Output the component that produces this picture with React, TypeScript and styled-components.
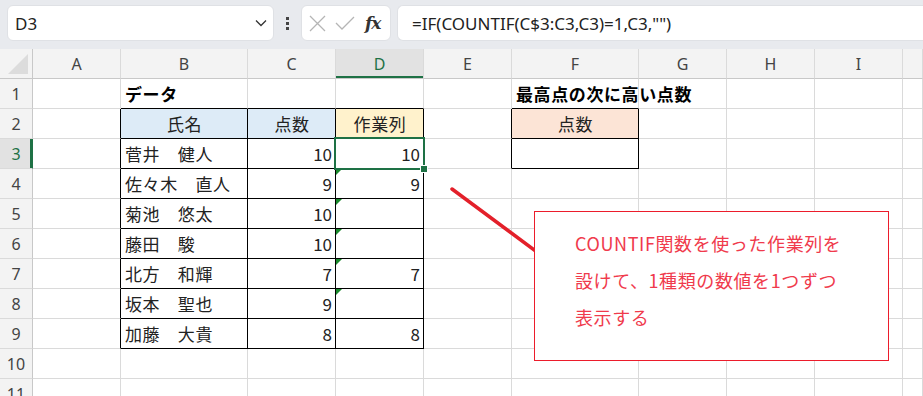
import styled, { createGlobalStyle, css } from 'styled-components';

const GlobalStyle = createGlobalStyle`
  html, body {
    margin: 0;
    padding: 0;
    background: #ffffff;
    overflow: hidden;
  }
  * {
    box-sizing: border-box;
  }
`;

const GRID_LINE = '#dadada';
const HEADER_BG = '#f3f3f3';
const SELECT_GREEN = '#1e7145';
const CJK = `"Noto Sans CJK JP", "Noto Sans", sans-serif`;

const COLUMNS = ['A', 'B', 'C', 'D', 'E', 'F', 'G', 'H', 'I', 'J'];
const ROWS = [1, 2, 3, 4, 5, 6, 7, 8, 9, 10, 11];

type Align = 'left' | 'center' | 'right';

interface CellData {
  text: string;
  align?: Align;
  bold?: boolean;
  fill?: string;
}

const names = ['菅井　健人', '佐々木　直人', '菊池　悠太', '藤田　駿', '北方　和輝', '坂本　聖也', '加藤　大貴'];
const scores = [10, 9, 10, 10, 7, 9, 8];
const helper = ['10', '9', '', '', '7', '', '8'];

const cells: Record<string, CellData> = {
  B1: { text: 'データ', bold: true },
  B2: { text: '氏名', align: 'center', fill: '#ddebf7' },
  C2: { text: '点数', align: 'center', fill: '#ddebf7' },
  D2: { text: '作業列', align: 'center', fill: '#fff2cc' },
  F1: { text: '最高点の次に高い点数', bold: true },
  F2: { text: '点数', align: 'center', fill: '#fce4d6' },
};
names.forEach((n, i) => {
  const r = i + 3;
  cells[`B${r}`] = { text: n };
  cells[`C${r}`] = { text: String(scores[i]), align: 'right' };
  cells[`D${r}`] = { text: helper[i], align: 'right' };
});

// cells with a green error flag in the corner
const flagged = new Set(['D4', 'D5', 'D6', 'D7', 'D8']);

// ranges drawn with black borders (column index: A = 0)
const boxes = [
  { c0: 1, c1: 3, r0: 2, r1: 9 },
  { c0: 5, c1: 5, r0: 2, r1: 3 },
];

const inBox = (c: number, r: number) =>
  boxes.some((b) => c >= b.c0 && c <= b.c1 && r >= b.r0 && r <= b.r1);

const Window = styled.div`
  width: 923px;
  height: 396px;
  overflow: hidden;
  font-family: ${CJK};
  color: #222;
`;

const FormulaBar = styled.div`
  height: 49px;
  background: #e8eaee;
  display: flex;
  align-items: flex-start;
  padding: 5px 0 0 7px;
`;

const Box = styled.div`
  height: 36px;
  background: #ffffff;
  border: 1px solid #dfe1e5;
  border-radius: 6px;
  display: flex;
  align-items: center;
`;

const NameBox = styled(Box)`
  width: 267px;
  padding: 0 6px 0 7px;
  justify-content: space-between;
  font-family: "Noto Sans", sans-serif;
  font-size: 17px;
  color: #222;
`;

const Kebab = styled.div`
  width: 27px;
  height: 36px;
  display: flex;
  flex-direction: column;
  align-items: center;
  justify-content: center;
  gap: 2px;
`;

const Dot = styled.span`
  width: 3px;
  height: 3px;
  background: #444;
`;

const ActionBox = styled(Box)`
  width: 90px;
  padding: 0 6px 0 7px;
  gap: 9px;
`;

const Fx = styled.span`
  font-family: "DejaVu Serif", serif;
  font-style: italic;
  font-weight: bold;
  font-size: 17px;
  color: #333;
  letter-spacing: -1px;
  margin-left: 1px;
`;

const FormulaInput = styled(Box)`
  flex: 1;
  margin-left: 6px;
  border-right: none;
  border-radius: 6px 0 0 6px;
  padding-left: 14px;
  font-family: "Noto Sans", sans-serif;
  font-size: 17px;
  color: #222;
  white-space: nowrap;
`;

const SheetArea = styled.div`
  position: relative;
  height: 347px;
  overflow: hidden;
`;

const Grid = styled.div`
  display: grid;
  grid-template-columns: 33px 88px 127px 88px 88px 88px 127px 88px 88px 88px 1fr;
  grid-auto-rows: 30px;
`;

const Corner = styled.div`
  background: ${HEADER_BG};
  border-right: 1px solid #c8c8c8;
  border-bottom: 1px solid #c8c8c8;
  position: relative;
  overflow: hidden;
  &::after {
    content: '';
    position: absolute;
    right: 4px;
    bottom: 4px;
    border-left: 20px solid transparent;
    border-bottom: 20px solid #dcdcdc;
  }
`;

const ColHeader = styled.div<{ $active?: boolean }>`
  background: ${({ $active }) => ($active ? '#e2e2e2' : HEADER_BG)};
  border-right: 1px solid ${GRID_LINE};
  border-bottom: 1px solid #c8c8c8;
  display: flex;
  align-items: center;
  justify-content: center;
  font-family: "Noto Sans", sans-serif;
  font-size: 16px;
  color: ${({ $active }) => ($active ? SELECT_GREEN : '#444')};
  ${({ $active }) =>
    $active &&
    css`
      box-shadow: inset 0 -2px 0 ${SELECT_GREEN};
    `}
`;

const RowHeader = styled.div<{ $active?: boolean }>`
  background: ${({ $active }) => ($active ? '#e2e2e2' : HEADER_BG)};
  border-right: 1px solid ${({ $active }) => ($active ? SELECT_GREEN : '#c8c8c8')};
  border-bottom: 1px solid ${GRID_LINE};
  display: flex;
  align-items: center;
  justify-content: center;
  font-family: "Noto Sans", sans-serif;
  font-size: 16px;
  color: ${({ $active }) => ($active ? SELECT_GREEN : '#444')};
  ${({ $active }) =>
    $active &&
    css`
      box-shadow: inset -2px 0 0 ${SELECT_GREEN};
    `}
`;

const Cell = styled.div<{
  $right: boolean;
  $bottom: boolean;
  $align: Align;
  $bold?: boolean;
  $fill?: string;
  $selected?: boolean;
  $flag?: boolean;
}>`
  position: relative;
  z-index: ${({ $selected, $bold }) => ($selected ? 2 : $bold ? 1 : 'auto')};
  background: ${({ $fill }) => $fill || '#ffffff'};
  border-right: 1px solid ${({ $right }) => ($right ? '#000' : GRID_LINE)};
  border-bottom: 1px solid ${({ $bottom }) => ($bottom ? '#000' : GRID_LINE)};
  display: flex;
  align-items: center;
  justify-content: ${({ $align }) =>
    $align === 'right' ? 'flex-end' : $align === 'center' ? 'center' : 'flex-start'};
  padding: 0 3px 0 4px;
  font-size: 17px;
  line-height: 1;
  letter-spacing: ${({ $align }) => ($align === 'right' ? '0' : '0.6px')};
  font-weight: ${({ $bold }) => ($bold ? 700 : 400)};
  color: ${({ $bold }) => ($bold ? '#000' : '#222')};
  white-space: nowrap;
  overflow: visible;

  ${({ $flag }) =>
    $flag &&
    css`
      &::before {
        content: '';
        position: absolute;
        top: 0;
        left: 0;
        border-top: 6px solid #1a8a2c;
        border-right: 6px solid transparent;
      }
    `}

  ${({ $selected }) =>
    $selected &&
    css`
      &::after {
        content: '';
        position: absolute;
        top: -2px;
        left: -2px;
        right: -2px;
        bottom: -2px;
        border: 2px solid ${SELECT_GREEN};
        pointer-events: none;
      }
    `}
`;

const FillHandle = styled.span`
  position: absolute;
  right: -4px;
  bottom: -4px;
  width: 6px;
  height: 6px;
  background: ${SELECT_GREEN};
  outline: 1px solid #ffffff;
  z-index: 2;
`;

const Pointer = styled.svg`
  position: absolute;
  left: 0;
  top: 0;
  z-index: 3;
  pointer-events: none;
`;

const Callout = styled.div`
  position: absolute;
  left: 534px;
  top: 162px;
  width: 355px;
  height: 150px;
  background: #ffffff;
  border: 1.5px solid #ec1c2b;
  padding: 13px 0 0 40px;
  font-family: ${CJK};
  font-size: 18px;
  line-height: 37px;
  letter-spacing: 0.6px;
  color: #f03a4c;
  z-index: 4;
`;

const CloseIcon = () => (
  <svg width="17" height="17" viewBox="0 0 17 17">
    <path d="M1 1 L16 16 M16 1 L1 16" stroke="#b5b5b5" strokeWidth="1.3" fill="none" />
  </svg>
);

const CheckIcon = () => (
  <svg width="20" height="16" viewBox="0 0 20 16">
    <path d="M1 8 L7 14 L19 2" stroke="#b5b5b5" strokeWidth="1.3" fill="none" />
  </svg>
);

const ChevronIcon = () => (
  <svg width="12" height="8" viewBox="0 0 12 8">
    <path d="M1 1.5 L6 6.5 L11 1.5" stroke="#333" strokeWidth="1.3" fill="none" />
  </svg>
);

export default function App() {
  return (
    <>
      <GlobalStyle />
      <Window>
        <FormulaBar>
          <NameBox>
            <span>D3</span>
            <ChevronIcon />
          </NameBox>
          <Kebab>
            <Dot />
            <Dot />
            <Dot />
          </Kebab>
          <ActionBox>
            <CloseIcon />
            <CheckIcon />
            <Fx>fx</Fx>
          </ActionBox>
          <FormulaInput>=IF(COUNTIF(C$3:C3,C3)=1,C3,"")</FormulaInput>
        </FormulaBar>

        <SheetArea>
          <Grid>
            <Corner />
            {COLUMNS.map((c) => (
              <ColHeader key={c} $active={c === 'D'}>
                {c === 'J' ? '' : c}
              </ColHeader>
            ))}
            {ROWS.map((r) => (
              <Row key={r} r={r} />
            ))}
          </Grid>

          <Pointer width="923" height="347">
            <line x1="452" y1="140" x2="545" y2="209" stroke="#e3202a" strokeWidth="3.5" strokeLinecap="round" />
          </Pointer>

          <Callout>
            COUNTIF関数を使った作業列を
            <br />
            設けて、1種類の数値を1つずつ
            <br />
            表示する
          </Callout>
        </SheetArea>
      </Window>
    </>
  );
}

function Row({ r }: { r: number }) {
  return (
    <>
      <RowHeader $active={r === 3}>{r}</RowHeader>
      {COLUMNS.map((col, ci) => {
        const key = `${col}${r}`;
        const data = cells[key];
        const right = inBox(ci, r) || inBox(ci + 1, r);
        const bottom = inBox(ci, r) || inBox(ci, r + 1);
        const selected = key === 'D3';
        return (
          <Cell
            key={key}
            $right={right}
            $bottom={bottom}
            $align={data?.align || 'left'}
            $bold={data?.bold}
            $fill={data?.fill}
            $selected={selected}
            $flag={flagged.has(key)}
          >
            {data?.text}
            {selected && <FillHandle />}
          </Cell>
        );
      })}
    </>
  );
}
